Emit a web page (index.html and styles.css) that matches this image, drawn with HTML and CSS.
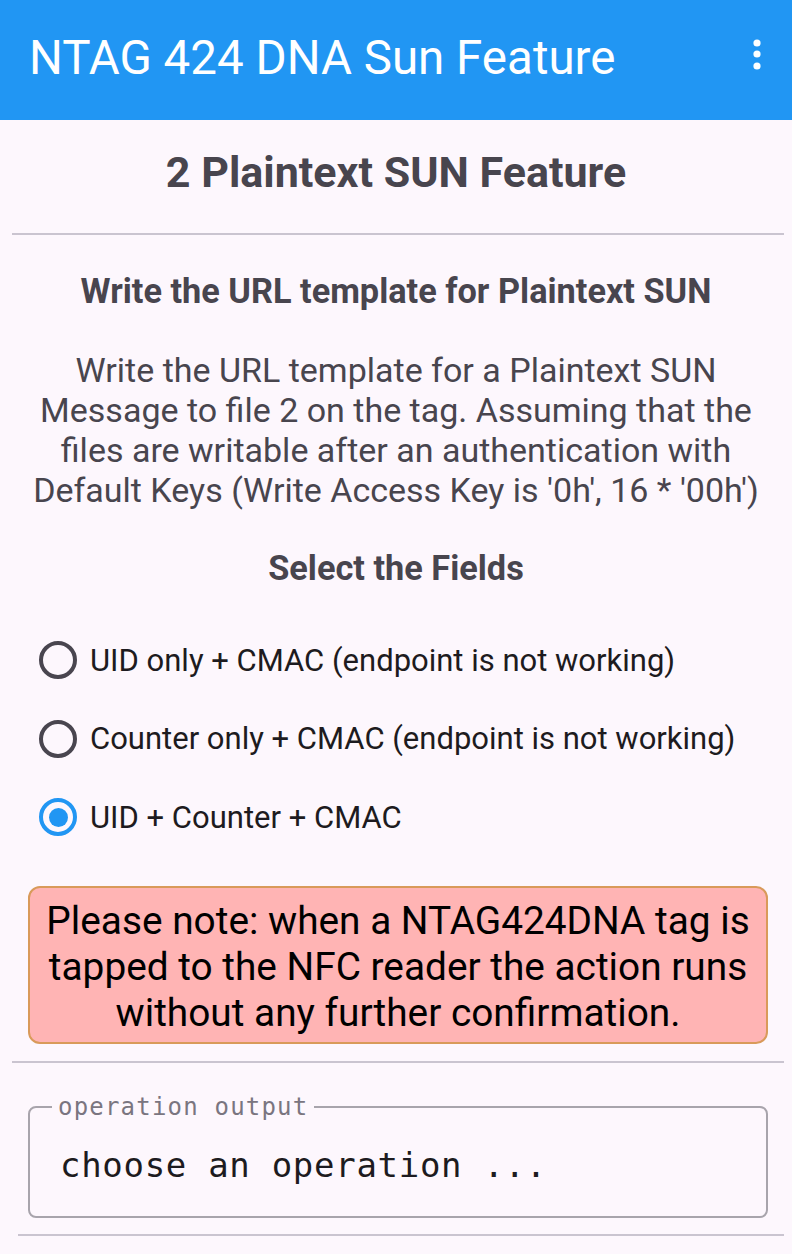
FILE: index.html
```html
<!DOCTYPE html>
<html>
<head>
<meta charset="utf-8">
<link rel="stylesheet" href="styles.css">
</head>
<body>
<header class="appbar">
  <h1 class="appbar-title">NTAG 424 DNA Sun Feature</h1>
  <svg class="kebab" width="12" height="36" viewBox="0 0 12 36"><circle cx="6" cy="4" r="3.6" fill="#fff"/><circle cx="6" cy="15" r="3.6" fill="#fff"/><circle cx="6" cy="27" r="3.6" fill="#fff"/></svg>
</header>
<main class="content">
  <h2 class="page-title">2 Plaintext SUN Feature</h2>
  <hr class="divider divider-top">
  <h3 class="section-title">Write the URL template for Plaintext SUN</h3>
  <p class="desc">Write the URL template for a Plaintext SUN Message to file 2 on the tag. Assuming that the files are writable after an authentication with Default Keys (Write Access Key is '0h', 16 * '00h')</p>
  <h3 class="section-title fields-title">Select the Fields</h3>
  <div class="radios">
    <label class="radio"><span class="radio-circle"></span><span class="radio-label">UID only + CMAC (endpoint is not working)</span></label>
    <label class="radio"><span class="radio-circle"></span><span class="radio-label">Counter only + CMAC (endpoint is not working)</span></label>
    <label class="radio"><span class="radio-circle checked"></span><span class="radio-label">UID + Counter + CMAC</span></label>
  </div>
  <div class="warning">Please note: when a NTAG424DNA tag is tapped to the NFC reader the action runs without any further confirmation.</div>
  <hr class="divider divider-mid">
  <fieldset class="output">
    <legend class="output-legend">operation output</legend>
    <div class="output-text">choose an operation ...</div>
  </fieldset>
  <hr class="divider divider-bottom">
</main>
</body>
</html>
```
FILE: styles.css
```css
html, body {
  margin: 0;
  padding: 0;
}
body {
  width: 792px;
  height: 1254px;
  overflow: hidden;
  background: #fdf7fd;
  font-family: Roboto, "Noto Sans", sans-serif;
}
.appbar {
  height: 120px;
  background: #2196f3;
  display: flex;
  align-items: center;
  justify-content: space-between;
  padding: 0 29px 0 29px;
  box-sizing: border-box;
}
.appbar-title {
  margin: 0;
  color: #fff;
  font-weight: 400;
  font-size: 47.5px;
  line-height: 1;
  padding-bottom: 2px;
}
.kebab {
  display: block;
  margin-bottom: 6px;
}
.content {
  display: flex;
  flex-direction: column;
  align-items: center;
}
.page-title {
  margin: 30px 0 0;
  font-size: 43px;
  font-weight: 700;
  color: #48454e;
  line-height: 44px;
}
.divider {
  border: none;
  height: 2px;
  background: #cac4d0;
  margin: 0;
  align-self: stretch;
}
.divider-top {
  margin: 39px 8px 0 12px;
}
.section-title {
  margin: 38px 0 0;
  font-size: 34.3px;
  font-weight: 700;
  color: #48454e;
  line-height: 36px;
}
.desc {
  margin: 41px 0 0;
  width: 740px;
  text-align: center;
  font-size: 34px;
  line-height: 40px;
  color: #48454e;
}
.fields-title {
  margin-top: 40px;
}
.radios {
  align-self: stretch;
  display: flex;
  flex-direction: column;
  margin: 35px 0 0 39px;
}
.radio {
  display: flex;
  align-items: center;
  height: 78.5px;
}
.radio-circle {
  width: 38px;
  height: 38px;
  box-sizing: border-box;
  border: 4px solid #49454f;
  border-radius: 50%;
  display: flex;
  align-items: center;
  justify-content: center;
  flex: none;
}
.radio-circle.checked {
  border-color: #2196f3;
}
.radio-circle.checked::after {
  content: "";
  width: 19px;
  height: 19px;
  border-radius: 50%;
  background: #2196f3;
}
.radio-label {
  margin-left: 13px;
  font-size: 31px;
  color: #1d1b20;
}
.warning {
  align-self: stretch;
  margin: 29.5px 24px 0 28px;
  background: #ffb4b4;
  border: 2px solid #d99a5a;
  border-radius: 12px;
  padding: 10px 4px 6px;
  text-align: center;
  font-size: 38.8px;
  line-height: 46px;
  color: #000;
}
.divider-mid {
  margin: 17px 8px 0 12px;
}
.output {
  align-self: stretch;
  margin: 30px 24px 0 28px;
  border: 2px solid #a8a4ac;
  border-radius: 8px;
  padding: 0 30px 31px;
  min-width: 0;
}
.output-legend {
  padding: 0 6px;
  margin-left: -8px;
  font-family: "DejaVu Sans Mono", monospace;
  font-size: 24px;
  line-height: 28px;
  color: #7a7580;
  letter-spacing: 1.2px;
}
.output-text {
  font-family: "DejaVu Sans Mono", monospace;
  font-size: 34px;
  line-height: 40px;
  color: #1d1b20;
  margin-top: 24px;
  letter-spacing: 0.7px;
}
.divider-bottom {
  margin: 16px 8px 0 18px;
}
```
